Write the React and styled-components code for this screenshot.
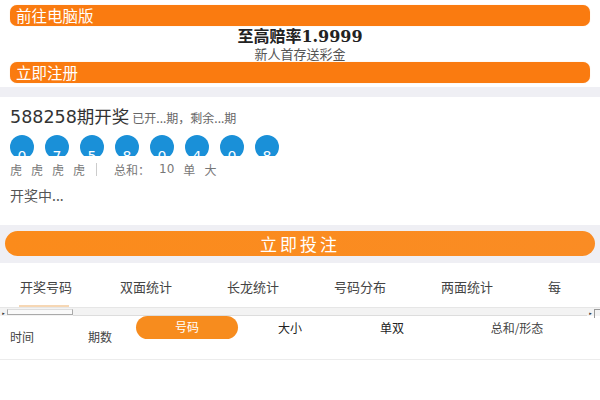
import styled, { createGlobalStyle } from "styled-components";

const GlobalStyle = createGlobalStyle`
  body {
    margin: 0;
    background: #ffffff;
    font-family: "Noto Sans CJK SC", "DejaVu Sans", sans-serif;
  }
`;

const balls = [0, 7, 5, 8, 0, 4, 0, 8];
const tabs = ["开奖号码", "双面统计", "长龙统计", "号码分布", "两面统计", "每"];

const App = () => {
  return (
    <Page>
      <GlobalStyle />
      <Header>
        <OrangeBar>前往电脑版</OrangeBar>
        <Promo>
          <PromoTitle>至高赔率<Num>1.9999</Num></PromoTitle>
          <PromoSub>新人首存送彩金</PromoSub>
        </Promo>
        <OrangeBar>立即注册</OrangeBar>
      </Header>

      <Card>
        <IssueLine>
          <Issue>588258期开奖</Issue>
          <IssueNote>已开...期，剩余...期</IssueNote>
        </IssueLine>
        <Balls>
          {balls.map((n, i) => (
            <Ball key={i}>
              <BallFace>{n}</BallFace>
            </Ball>
          ))}
        </Balls>
        <Stats>
          <Stat>虎</Stat>
          <Stat>虎</Stat>
          <Stat>虎</Stat>
          <Stat>虎</Stat>
          <Divider />
          <Stat>总和：</Stat>
          <Stat>10</Stat>
          <Stat>单</Stat>
          <Stat>大</Stat>
        </Stats>
        <Status>开奖中...</Status>
      </Card>

      <BetBand>
        <BetButton>立即投注</BetButton>
      </BetBand>

      <Lower>
        <TabBar>
          {tabs.map((t, i) => (
            <Tab key={t} $active={i === 0}>{t}</Tab>
          ))}
        </TabBar>
        <FakeScroll>
          <ArrowBtn>▸</ArrowBtn>
          <Thumb />
          <Track />
          <ArrowBtn>▸</ArrowBtn>
          <Corner />
        </FakeScroll>

        <TableHead>
          <HeadCell $w="78px" $low>时间</HeadCell>
          <HeadCell $w="48px" $low>期数</HeadCell>
          <Pill>号码</Pill>
          <HeadCell $w="104px" $center $dark>大小</HeadCell>
          <HeadCell $w="100px" $center $dark>单双</HeadCell>
          <HeadCell $w="150px" $center>总和/形态</HeadCell>
        </TableHead>
      </Lower>
    </Page>
  );
};

const Page = styled.div`
  width: 600px;
  height: 400px;
  overflow: hidden;
  background: #efeff4;
`;

const Header = styled.div`
  padding: 5px 10px 4px;
  background: #ffffff;
`;

const OrangeBar = styled.div`
  height: 21px;
  line-height: 21px;
  border-radius: 7px;
  background: #fa7b10;
  color: #ffffff;
  font-size: 15.5px;
  padding-left: 6px;
  box-shadow: 0 0 1px #fdc99a;
`;

const Promo = styled.div`
  display: flex;
  flex-direction: column;
  align-items: center;
  height: 36px;
  box-sizing: border-box;
`;

const PromoTitle = styled.div`
  font-size: 16px;
  font-weight: bold;
  color: #222;
  line-height: 19px;
`;

const Num = styled.span`
  font-family: "DejaVu Serif", serif;
  font-size: 16px;
`;

const PromoSub = styled.div`
  font-size: 13px;
  color: #555;
  line-height: 16px;
`;

const Card = styled.div`
  margin-top: 10px;
  background: #ffffff;
  padding: 10px 10px 0;
  height: 128px;
  box-sizing: border-box;
`;

const IssueLine = styled.div`
  display: flex;
  align-items: baseline;
  gap: 3px;
  height: 20px;
`;

const Issue = styled.span`
  font-size: 17.5px;
  color: #333;
  line-height: 20px;
  font-family: "DejaVu Sans", "Noto Sans CJK SC", sans-serif;
`;

const IssueNote = styled.span`
  font-size: 12px;
  color: #666;
`;

const Balls = styled.div`
  display: flex;
  gap: 11px;
  margin-top: 8px;
`;

const Ball = styled.div`
  width: 24px;
  height: 21px;
  overflow: hidden;
`;

const BallFace = styled.div`
  width: 24px;
  height: 24px;
  border-radius: 50%;
  background: #1a90d8;
  color: #ffffff;
  font-family: "DejaVu Sans", sans-serif;
  font-size: 14px;
  text-align: center;
  line-height: 16px;
  padding-top: 13px;
  box-sizing: border-box;
`;

const Stats = styled.div`
  display: flex;
  align-items: center;
  margin-top: 5px;
  height: 16px;
  font-size: 12px;
  color: #777;
`;

const Stat = styled.span`
  margin-right: 9px;
  font-family: "DejaVu Sans", "Noto Sans CJK SC", sans-serif;
`;

const Divider = styled.span`
  width: 1px;
  height: 13px;
  background: #ccc;
  margin: 0 17px 0 2px;
`;

const Status = styled.div`
  margin-top: 8px;
  font-size: 14px;
  color: #555;
`;

const BetBand = styled.div`
  padding: 6px 5px 7px;
`;

const BetButton = styled.div`
  height: 25px;
  line-height: 25px;
  border-radius: 13px;
  background: linear-gradient(to right, #fb8b1b, #fa8c24);
  color: #ffffff;
  text-align: center;
  font-size: 17px;
  letter-spacing: 3px;
`;

const Lower = styled.div`
  background: #ffffff;
  height: 140px;
`;

const TabBar = styled.div`
  display: flex;
  height: 44px;
  padding-left: 20px;
  white-space: nowrap;
`;

const Tab = styled.div`
  position: relative;
  flex: none;
  width: 107px;
  height: 44px;
  font-size: 13px;
  color: #444;
  line-height: 47px;
  &:first-child {
    width: 100px;
  }
  &::after {
    content: "";
    display: ${(p) => (p.$active ? "block" : "none")};
    position: absolute;
    left: -1px;
    bottom: 0;
    width: 50px;
    height: 2px;
    background: #f6d7b4;
  }
`;

const FakeScroll = styled.div`
  display: flex;
  align-items: center;
  height: 8px;
  background: #f3f3f3;
  border-top: 1px solid #e6e6e6;
`;

const ArrowBtn = styled.div`
  width: 7px;
  height: 7px;
  font-size: 5px;
  line-height: 7px;
  text-align: center;
  color: #333;
`;

const Thumb = styled.div`
  width: 66px;
  height: 6px;
  border: 1px solid #aaa;
  border-top-color: #ddd;
  background: #fafafa;
  box-sizing: border-box;
`;

const Track = styled.div`
  flex: 1;
  height: 6px;
  border-bottom: 1px solid #ddd;
`;

const Corner = styled.div`
  width: 5px;
  height: 8px;
  border-left: 1px solid #999;
  border-top: 1px solid #999;
  margin-top: 2px;
`;

const TableHead = styled.div`
  display: flex;
  align-items: flex-start;
  height: 43px;
  padding-left: 10px;
  border-bottom: 1px solid #ececec;
`;

const HeadCell = styled.div`
  flex: none;
  width: ${(p) => p.$w};
  font-size: 12px;
  color: ${(p) => (p.$dark ? "#222" : "#444")};
  text-align: ${(p) => (p.$center ? "center" : "left")};
  line-height: 23px;
  margin-top: ${(p) => (p.$low ? "9px" : "0")};
`;

const Pill = styled.div`
  flex: none;
  width: 102px;
  height: 23px;
  line-height: 21px;
  border-radius: 12px;
  background: #f78c1e;
  color: #ffffff;
  font-size: 12px;
  text-align: center;
`;

export default App;
